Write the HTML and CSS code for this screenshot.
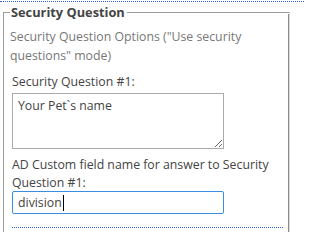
FILE: index.html
```html
<!DOCTYPE html>
<html>
<head>
<meta charset="utf-8">
<link rel="stylesheet" href="styles.css">
</head>
<body>
<div class="topline"></div>
<fieldset class="group">
  <legend class="group-title">Security Question</legend>
  <div class="desc">Security Question Options ("Use security questions" mode)</div>
  <div class="section">
    <div class="label">Security Question #1:</div>
    <textarea class="area">Your Pet`s name</textarea>
    <div class="label label-2">AD Custom field name for answer to Security Question #1:</div>
    <div class="field">division<span class="caret"></span></div>
    <div class="sep"></div>
  </div>
</fieldset>
</body>
</html>
```
FILE: styles.css
```css
html, body {
  margin: 0;
  padding: 0;
  background: #fff;
  width: 304px;
  height: 232px;
  overflow: hidden;
}
body {
  font-family: "Open Sans", "Noto Sans", sans-serif;
  font-size: 12.3px;
  color: #444;
}
.topline {
  margin-top: 1px;
  height: 0;
  border-top: 1px dotted #2f62d0;
}
.group {
  margin: 1px 0 0 3px;
  width: 287px;
  box-sizing: border-box;
  border-style: solid;
  border-width: 1px 1px 0 1px;
  border-color: #9a9a9a #dcdcdc #dcdcdc #9a9a9a;
  box-shadow: inset 1px 1px #fff, inset -1px 0 #8a8a8a;
  padding: 0 5px 0 6px;
  height: 240px;
}
.group-title {
  font-weight: bold;
  font-size: 12.8px;
  color: #444;
  padding: 0 2px 0 1px;
  line-height: 18px;
}
.desc {
  color: #777;
  line-height: 18.5px;
  margin-top: 7px;
  width: 270px;
}
.section {
  margin-left: 2px;
  width: 271px;
}
.label {
  line-height: 18px;
  margin-top: 8px;
  color: #444;
}
.area {
  display: block;
  box-sizing: border-box;
  width: 212px;
  height: 56px;
  margin-top: 2px;
  border: 1px solid #ababab;
  padding: 3px 5px;
  font-family: inherit;
  font-size: 12.3px;
  line-height: 18px;
  color: #444;
  resize: both;
}
.label-2 {
  margin-top: 7px;
  line-height: 17.5px;
}
.field {
  box-sizing: border-box;
  width: 212px;
  height: 23px;
  margin-top: 0;
  border: 1px solid #3b8de0;
  border-radius: 2px;
  padding: 2px 5px;
  line-height: 18px;
  color: #444;
  display: flex;
  align-items: center;
}
.caret {
  display: inline-block;
  width: 1px;
  height: 16px;
  background: #000;
  margin-left: 1px;
}
.sep {
  margin-top: 13px;
  border-top: 1px dotted #2f62d0;
}
```
